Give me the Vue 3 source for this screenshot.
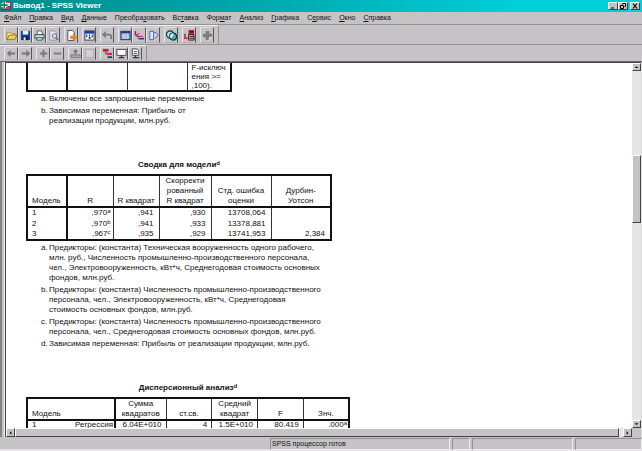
<template>
  <div class="viewer">
    <header class="titlebar">
      <svg class="logo" viewBox="0 0 12 12" aria-hidden="true">
        <rect x="1" y="1" width="11" height="10" fill="#7a1f6b" />
        <rect x="6" y="2" width="5" height="4" fill="#f4d8ea" />
        <rect x="6" y="7" width="5" height="3" fill="#c23a78" />
        <path d="M4 1v8M0 5h8" stroke="#fff" stroke-width="4" />
        <path d="M4 1v8M0 5h8" stroke="#0a8a2c" stroke-width="2" />
      </svg>
      <h1>Вывод1 - SPSS Viewer</h1>
      <div class="window-buttons">
        <button aria-label="Свернуть"><svg viewBox="0 0 8 6"><path d="M2 5h3" stroke="#000" /></svg></button>
        <button aria-label="Восстановить">
          <svg viewBox="0 0 8 6"><path d="M3.5 1.5V.5h3v3h-1M1.5 2.5h3v3h-3z" fill="none" stroke="#000" /></svg>
        </button>
        <button class="close" aria-label="Закрыть">
          <svg viewBox="0 0 8 6"><path d="M2 .5l4 5M6 .5l-4 5" stroke="#000" stroke-width="1.2" /></svg>
        </button>
      </div>
    </header>

    <nav class="menu">
      <button v-for="item in menu" :key="item.join('')">
        {{ item[0] }}<u>{{ item[1] }}</u>{{ item[2] }}
      </button>
    </nav>

    <div v-for="(bar, b) in toolbars" :key="b" class="toolbar-row">
      <div class="toolbar">
        <div v-for="(group, g) in bar" :key="g" class="tool-group">
          <button v-for="tool in group" :key="tool.name" class="tool" :aria-label="tool.name">
            <svg viewBox="0 0 12 12" v-html="tool.icon"></svg>
          </button>
        </div>
      </div>
    </div>

    <div class="workspace">
      <div class="splitter"></div>
      <div class="pane">
        <main class="output">
          <table class="pivot variables">
            <tbody>
              <tr>
                <td></td>
                <td></td>
                <td></td>
                <td>F-исключ<br />ения &gt;=<br />,100).</td>
              </tr>
            </tbody>
          </table>
          <ol class="notes first-notes">
            <li>Включены все запрошенные переменные</li>
            <li>Зависимая переменная: Прибыль от<br />реализации продукции, млн.руб.</li>
          </ol>

          <table class="pivot summary">
            <caption>Сводка для модели<sup>d</sup></caption>
            <thead>
              <tr>
                <th>Модель</th>
                <th>R</th>
                <th>R квадрат</th>
                <th>Скорректи<br />рованный<br />R квадрат</th>
                <th>Стд. ошибка<br />оценки</th>
                <th>Дурбин-<br />Уотсон</th>
              </tr>
            </thead>
            <tbody>
              <tr v-for="row in summary" :key="row.model">
                <td>{{ row.model }}</td>
                <td>{{ row.r }}<sup>{{ row.note }}</sup></td>
                <td>{{ row.r2 }}</td>
                <td>{{ row.adjusted }}</td>
                <td>{{ row.error }}</td>
                <td>{{ row.durbin }}</td>
              </tr>
            </tbody>
          </table>
          <ol class="notes summary-notes">
            <li>
              Предикторы: (константа) Техническая вооруженность одного рабочего,<br />млн. руб.,
              Численность промышленно-производственного персонала,<br />чел., Электровооруженность,
              кВт*ч, Среднегодовая стоимость основных<br />фондов, млн.руб.
            </li>
            <li>
              Предикторы: (константа) Численность промышленно-производственного<br />персонала, чел.,
              Электровооруженность, кВт*ч, Среднегодовая<br />стоимость основных фондов, млн.руб.
            </li>
            <li>
              Предикторы: (константа) Численность промышленно-производственного<br />персонала, чел.,
              Среднегодовая стоимость основных фондов, млн.руб.
            </li>
            <li>Зависимая переменная: Прибыль от реализации продукции, млн.руб.</li>
          </ol>

          <table class="pivot anova">
            <caption>Дисперсионный анализ<sup>d</sup></caption>
            <thead>
              <tr>
                <th colspan="2">Модель</th>
                <th>Сумма<br />квадратов</th>
                <th>ст.св.</th>
                <th>Средний<br />квадрат</th>
                <th>F</th>
                <th>Знч.</th>
              </tr>
            </thead>
            <tbody>
              <tr>
                <td>1</td>
                <td>Регрессия</td>
                <td>6.04E+010</td>
                <td>4</td>
                <td>1.5E+010</td>
                <td>80.419</td>
                <td>.000<sup>a</sup></td>
              </tr>
            </tbody>
          </table>
        </main>
        <div class="vscroll">
          <button class="arrow" aria-label="Вверх"><svg viewBox="0 0 8 6"><path d="M2 4h4l-2-2z" /></svg></button>
          <div class="space-above"></div>
          <div class="thumb"></div>
          <div class="space-below"></div>
          <button class="arrow" aria-label="Вниз"><svg viewBox="0 0 8 6"><path d="M2 2h4l-2 2z" /></svg></button>
        </div>
        <div class="hscroll">
          <button class="arrow" aria-label="Влево"><svg viewBox="0 0 8 6"><path d="M5 1v4l-2-2z" /></svg></button>
          <div class="thumb"></div>
          <button class="arrow" aria-label="Вправо"><svg viewBox="0 0 8 6"><path d="M3 1v4l2-2z" /></svg></button>
        </div>
        <div class="corner"></div>
      </div>
    </div>

    <footer class="status">
      <span></span>
      <span>SPSS процессор готов</span>
      <span></span>
      <span></span>
      <span></span>
    </footer>
  </div>
</template>

<script setup>
const menu = [
  ['', 'Ф', 'айл'],
  ['', 'П', 'равка'],
  ['', 'В', 'ид'],
  ['', 'Д', 'анные'],
  ['Преобра', 'з', 'овать'],
  ['Вс', 'т', 'авка'],
  ['Фор', 'м', 'ат'],
  ['', 'А', 'нализ'],
  ['', 'Г', 'рафика'],
  ['С', 'е', 'рвис'],
  ['', 'О', 'кно'],
  ['', 'С', 'правка'],
]

const screen =
  '<rect x="1" y="1.5" width="10" height="6.5" fill="#fff" stroke="#445"/><path d="M6 8v2M3 10.5h6" stroke="#334" stroke-width="1.4"/>'

const toolbars = [
  [
    [
      {
        name: 'Открыть',
        icon: '<path d="M1 10V3h4l1 1h4v2" fill="#fff2a0" stroke="#a08a20"/><path d="M1 10.5l2.500-5h8.500l-2.500 5z" fill="#f2cf4a" stroke="#8a7420"/>',
      },
      {
        name: 'Сохранить',
        icon: '<rect x="1" y="1" width="10" height="10" fill="#1c3c9c"/><rect x="3" y="1" width="6" height="4" fill="#e8f0ff"/><rect x="3" y="7" width="6" height="4" fill="#0c1c50"/><rect x="4" y="8" width="2" height="3" fill="#fff"/>',
      },
      {
        name: 'Печать',
        icon: '<path d="M3.500 5V1h5l1 4" fill="#fff" stroke="#456"/><path d="M1 5h10v4H1z" fill="#c9d8d8" stroke="#244850"/><path d="M3 8.500h6v2.500H3z" fill="#fff" stroke="#244850"/>',
      },
      {
        name: 'Просмотр',
        icon: '<path d="M2 1h5l2 2v8H2z" fill="#eef" stroke="#889"/><circle cx="7" cy="6.500" r="2.500" fill="#cde" stroke="#668"/><path d="M9 8.500l2 2.500" stroke="#668" stroke-width="1.500"/>',
      },
    ],
    [
      {
        name: 'Экспорт',
        icon: '<path d="M2 .5h5l2 2v9H2z" fill="#fff" stroke="#446"/><path d="M5 6.500h3V4l4 4-4 4V9.500H5z" fill="#f08420" stroke="#d06810" stroke-width=".5"/>',
      },
    ],
    [
      {
        name: 'Диалоги',
        icon: '<rect x="1" y="1" width="10" height="10" fill="#fff" stroke="#335"/><path d="M1 2.500h10" stroke="#1c3ca8" stroke-width="3"/><path d="M3 5v3M6 5v2M9 5v3" stroke="#1c3ca8" stroke-width="1.300"/><path d="M5 8.500h3M6 8v2" stroke="#222"/>',
      },
    ],
    [
      {
        name: 'Отменить',
        icon: '<path d="M3 5h5q3 0 2 5" fill="none" stroke="#777" stroke-width="1.800"/><path d="M0 5l4-4v8z" fill="#777"/>',
      },
    ],
    [
      {
        name: 'К данным',
        icon: '<rect x="1" y="1.500" width="10" height="9" fill="#aab8d8" stroke="#223c78" stroke-width="1.200"/><path d="M1 2.500h10" stroke="#223c88" stroke-width="2"/><path d="M2 6h8M2 8h8M4.500 4v6M8 4v6" stroke="#d4dcf0" stroke-width=".6"/>',
      },
      {
        name: 'К наблюдению',
        icon: '<path d="M1.500 1v4l4 3" fill="none" stroke="#b02050" stroke-width="1.600"/><path d="M5 9.500h6" stroke="#28409c" stroke-width="1.800"/><path d="M3 5.500l3-2M5 7h5" stroke="#d04060" stroke-width="1.400"/>',
      },
      {
        name: 'Переменные',
        icon: '<path d="M2 1.500h4v9H2z" fill="#e4e8ff" stroke="#5060a8"/><path d="M6 3h3l2 2.500-3 3.500" fill="#cfd6f4" stroke="#5060a8"/>',
      },
    ],
    [
      {
        name: 'Наборы',
        icon: '<circle cx="4.500" cy="5" r="4" fill="#b8e0dc" stroke="#103848" stroke-width="1.200"/><circle cx="7.800" cy="7.200" r="3.800" fill="#4aa4b0" stroke="#103848" stroke-width="1.200"/><path d="M4.500 7q0-3 3.500-3.500Q8.500 7 5 9z" fill="#e8f8f8"/>',
      },
    ],
    [
      {
        name: 'Последний вывод',
        icon: '<path d="M5 0h6v5H5z" fill="#c81c30"/><path d="M6 2h5M6 7h5M6 9h5" stroke="#301018"/><path d="M5 5h6v6H5z" fill="none" stroke="#401820"/><path d="M1 4v5h3" fill="none" stroke="#c81c30" stroke-width="1.600"/>',
      },
    ],
    [
      {
        name: 'Назначить окно',
        icon: '<path d="M4 1h4v3h3v4H8v3H4V8H1V4h3z" fill="#7d7d7d"/><path d="M8 8v3M11 8H8" stroke="#fff" stroke-width=".7"/>',
      },
    ],
  ],
  [
    [
      { name: 'Назад', icon: '<path d="M1 6l4-4v3h5v2H5v3z" fill="#777"/>' },
      { name: 'Вперед', icon: '<path d="M11 6L7 2v3H2v2h5v3z" fill="#777"/>' },
    ],
    [
      { name: 'Развернуть', icon: '<path d="M6 2v8M2 6h8" stroke="#777" stroke-width="2"/>' },
      { name: 'Свернуть ветвь', icon: '<path d="M2 6h8" stroke="#777" stroke-width="2"/>' },
    ],
    [
      {
        name: 'Показать',
        icon: '<path d="M6 1l3 3H7v3H5V4H3z" fill="#777"/><path d="M1 7.500h10v3H1z" fill="#aaa" stroke="#777"/>',
      },
      {
        name: 'Скрыть',
        icon: '<rect x="1.500" y="1.500" width="9" height="9" fill="#d2d0d2" stroke="#aaa"/>',
      },
    ],
    [
      {
        name: 'Заголовок',
        icon: '<path d="M1 2.500h6" stroke="#c81c38" stroke-width="3"/><path d="M5 6.500h6" stroke="#d42c48" stroke-width="2.500"/><path d="M4 4v3" stroke="#345"/><path d="M6 10h5" stroke="#28386c" stroke-width="2"/>',
      },
      { name: 'Название', icon: screen },
      {
        name: 'Текст',
        icon: '<path d="M2.500 1h5l2 2v5h-7z" fill="#fff" stroke="#445"/><path d="M4 4h4M4 6h4" stroke="#3858a0"/><path d="M6 8v2M3 10.500h7" stroke="#334" stroke-width="1.400"/>',
      },
    ],
  ],
]

const summary = [
  { model: 1, r: ',970', note: 'a', r2: ',941', adjusted: ',930', error: '13708,064', durbin: '' },
  { model: 2, r: ',970', note: 'b', r2: ',941', adjusted: ',933', error: '13378,881', durbin: '' },
  { model: 3, r: ',967', note: 'c', r2: ',935', adjusted: ',929', error: '13741,953', durbin: '2,384' },
]
</script>

<style>
body {
  margin: 0;
}
</style>

<style scoped>
* {
  box-sizing: border-box;
}

.viewer {
  display: flex;
  flex-direction: column;
  height: 100vh;
  background: #c6c3c6;
  color: #111;
  font: 7px/10px 'Liberation Sans', Arial, sans-serif;
  overflow: hidden;
}

button {
  margin: 0;
  padding: 0;
  border: 0;
  background: none;
  color: inherit;
  font: inherit;
}

svg {
  display: block;
}

.titlebar {
  display: flex;
  align-items: center;
  flex: none;
  height: 12px;
  padding: 0 2px 0 1px;
  background: linear-gradient(90deg, #008c8c, #00a8ac 40%, #00ced8 80%);
  color: #fff;
}

.titlebar h1 {
  flex: 1;
  margin: 0;
  font-size: 8px;
  line-height: 10px;
}

.logo {
  width: 10px;
  height: 10px;
  margin-right: 2px;
}

.window-buttons {
  display: flex;
}

.window-buttons button {
  width: 10px;
  height: 8px;
  border: 1px solid;
  border-color: #fff #404040 #404040 #fff;
  background: #c6c3c6;
}

.window-buttons svg {
  width: 8px;
  height: 6px;
}

.window-buttons .close {
  margin-left: 2px;
}

.menu {
  display: flex;
  flex: none;
  gap: 8px;
  height: 12px;
  padding: 0 4px;
}

.menu button {
  white-space: nowrap;
}

.toolbar-row {
  display: flex;
  flex: none;
  height: 20px;
  border-top: 1px solid #949194;
}

.toolbar-row + .toolbar-row {
  height: 17px;
}

.toolbar {
  display: flex;
  gap: 4px;
  padding: 1px 4px 1px 4px;
  border-top: 1px solid #efefef;
  border-right: 1px solid #949194;
  flex: none;
}

.tool-group {
  display: flex;
}

.tool {
  width: 14px;
  padding: 1px 0 1px 1px;
  border: 1px solid;
  border-color: #dcdadc #555 #b4b2b4 #e8e6e8;
}

.tool svg {
  width: 11px;
  height: 11px;
}

.toolbar-row + .toolbar-row .tool {
  padding: 0 0 0 1px;
}

.workspace {
  display: flex;
  flex: 1;
  min-height: 0;
  border-top: 1px solid #6b696b;
}

.splitter {
  width: 5px;
  border-left: 2px solid #848284;
  border-right: 1px solid #f4f4f4;
}

.pane {
  display: grid;
  grid-template-columns: 1fr 9px;
  grid-template-rows: minmax(0, 1fr) 9px;
  flex: 1;
  min-width: 0;
  border-left: 1px solid #444;
  border-right: 1px solid #ddd;
}

.output {
  overflow: hidden;
  padding-left: 20px;
  border-top: 1px solid #444;
  background: #fff;
  font-size: 8px;
}

.pivot {
  table-layout: fixed;
  border-collapse: collapse;
  border: 2px solid #111;
}

.pivot caption {
  height: 10px;
  margin-bottom: 4px;
  font-weight: bold;
  line-height: 10px;
  white-space: nowrap;
}

.pivot th {
  padding: 0 1px;
  border-left: 1px solid #333;
  border-bottom: 2px solid #111;
  font-weight: normal;
  line-height: 10px;
  text-align: center;
  vertical-align: bottom;
  white-space: nowrap;
}

.pivot td {
  height: 11px;
  padding: 0 5px;
  border-left: 1px solid #333;
  line-height: 10px;
  text-align: right;
  white-space: nowrap;
}

.pivot th:first-child,
.pivot td:first-child {
  padding-left: 4px;
  text-align: left;
}

.pivot th:nth-child(2) {
  border-left: 2px solid #111;
}

sup {
  font-size: 6px;
  line-height: 0;
  vertical-align: 2px;
}

.pivot td sup {
  margin-right: -3px;
}

.variables {
  width: 206px;
  border-top: 0;
}

.pivot.variables td {
  height: 28px;
  padding: 0 4px;
  line-height: 9px;
  text-align: left;
}

.variables td:nth-child(1) {
  width: 40px;
}

.variables td:nth-child(2),
.variables td:nth-child(3) {
  width: 60px;
}

.variables td:nth-child(2),
.summary td:nth-child(2),
.anova td:nth-child(3) {
  border-left: 2px solid #111;
}

.summary {
  width: 306px;
}

.summary th:nth-child(1) {
  width: 40px;
}

.summary th:nth-child(2),
.summary th:nth-child(3) {
  width: 46px;
}

.summary th:nth-child(4) {
  width: 52px;
}

.anova {
  width: 324px;
}

.anova th:nth-child(1) {
  width: 88px;
}

.anova th:nth-child(2) {
  width: 51px;
}

.pivot.anova td {
  height: 9px;
  padding: 0 4px;
  line-height: 8px;
}

.pivot.anova td:nth-child(2) {
  border-left: 0;
}

.notes {
  display: flex;
  flex-direction: column;
  gap: 2px;
  margin: 2px 0 0;
  padding: 0 0 0 23px;
  list-style: none;
  counter-reset: note;
}

.notes li {
  position: relative;
  counter-increment: note;
  white-space: nowrap;
}

.notes li::before {
  content: counter(note, lower-alpha) '.';
  position: absolute;
  left: -8px;
}

.first-notes {
  margin-bottom: 34px;
}

.summary-notes {
  margin-bottom: 34px;
}

.vscroll {
  display: flex;
  flex-direction: column;
  border-top: 1px solid #444;
  background: #e7e5e7;
}

.arrow {
  flex: none;
  width: 9px;
  height: 8px;
  border: 1px solid;
  border-color: #fff #444 #444 #fff;
  background: #c6c3c6;
}

.arrow svg {
  width: 7px;
  height: 6px;
}

.thumb {
  border: 1px solid;
  border-color: #fff #444 #444 #fff;
  background: #c6c3c6;
}

.space-above {
  flex: 84;
}

.vscroll .thumb {
  flex: 67;
}

.space-below {
  flex: 198;
}

.hscroll {
  display: flex;
  background: #e7e5e7;
}

.hscroll .thumb {
  flex: 1;
  margin-right: 4px;
}

.hscroll .arrow {
  height: 9px;
}

.corner {
  background: #c6c3c6;
}

.status {
  display: grid;
  grid-template-columns: 268fr 180fr 18px 101fr 67fr;
  gap: 2px;
  flex: none;
  height: 14px;
  padding-top: 1px;
  border-bottom: 2px solid #e4e2e4;
}

.status span {
  padding-left: 1px;
  border: 1px solid;
  border-color: #949194 #efefef #efefef #949194;
  line-height: 10px;
  white-space: nowrap;
}

.status span:first-child {
  border-color: transparent;
}
</style>
